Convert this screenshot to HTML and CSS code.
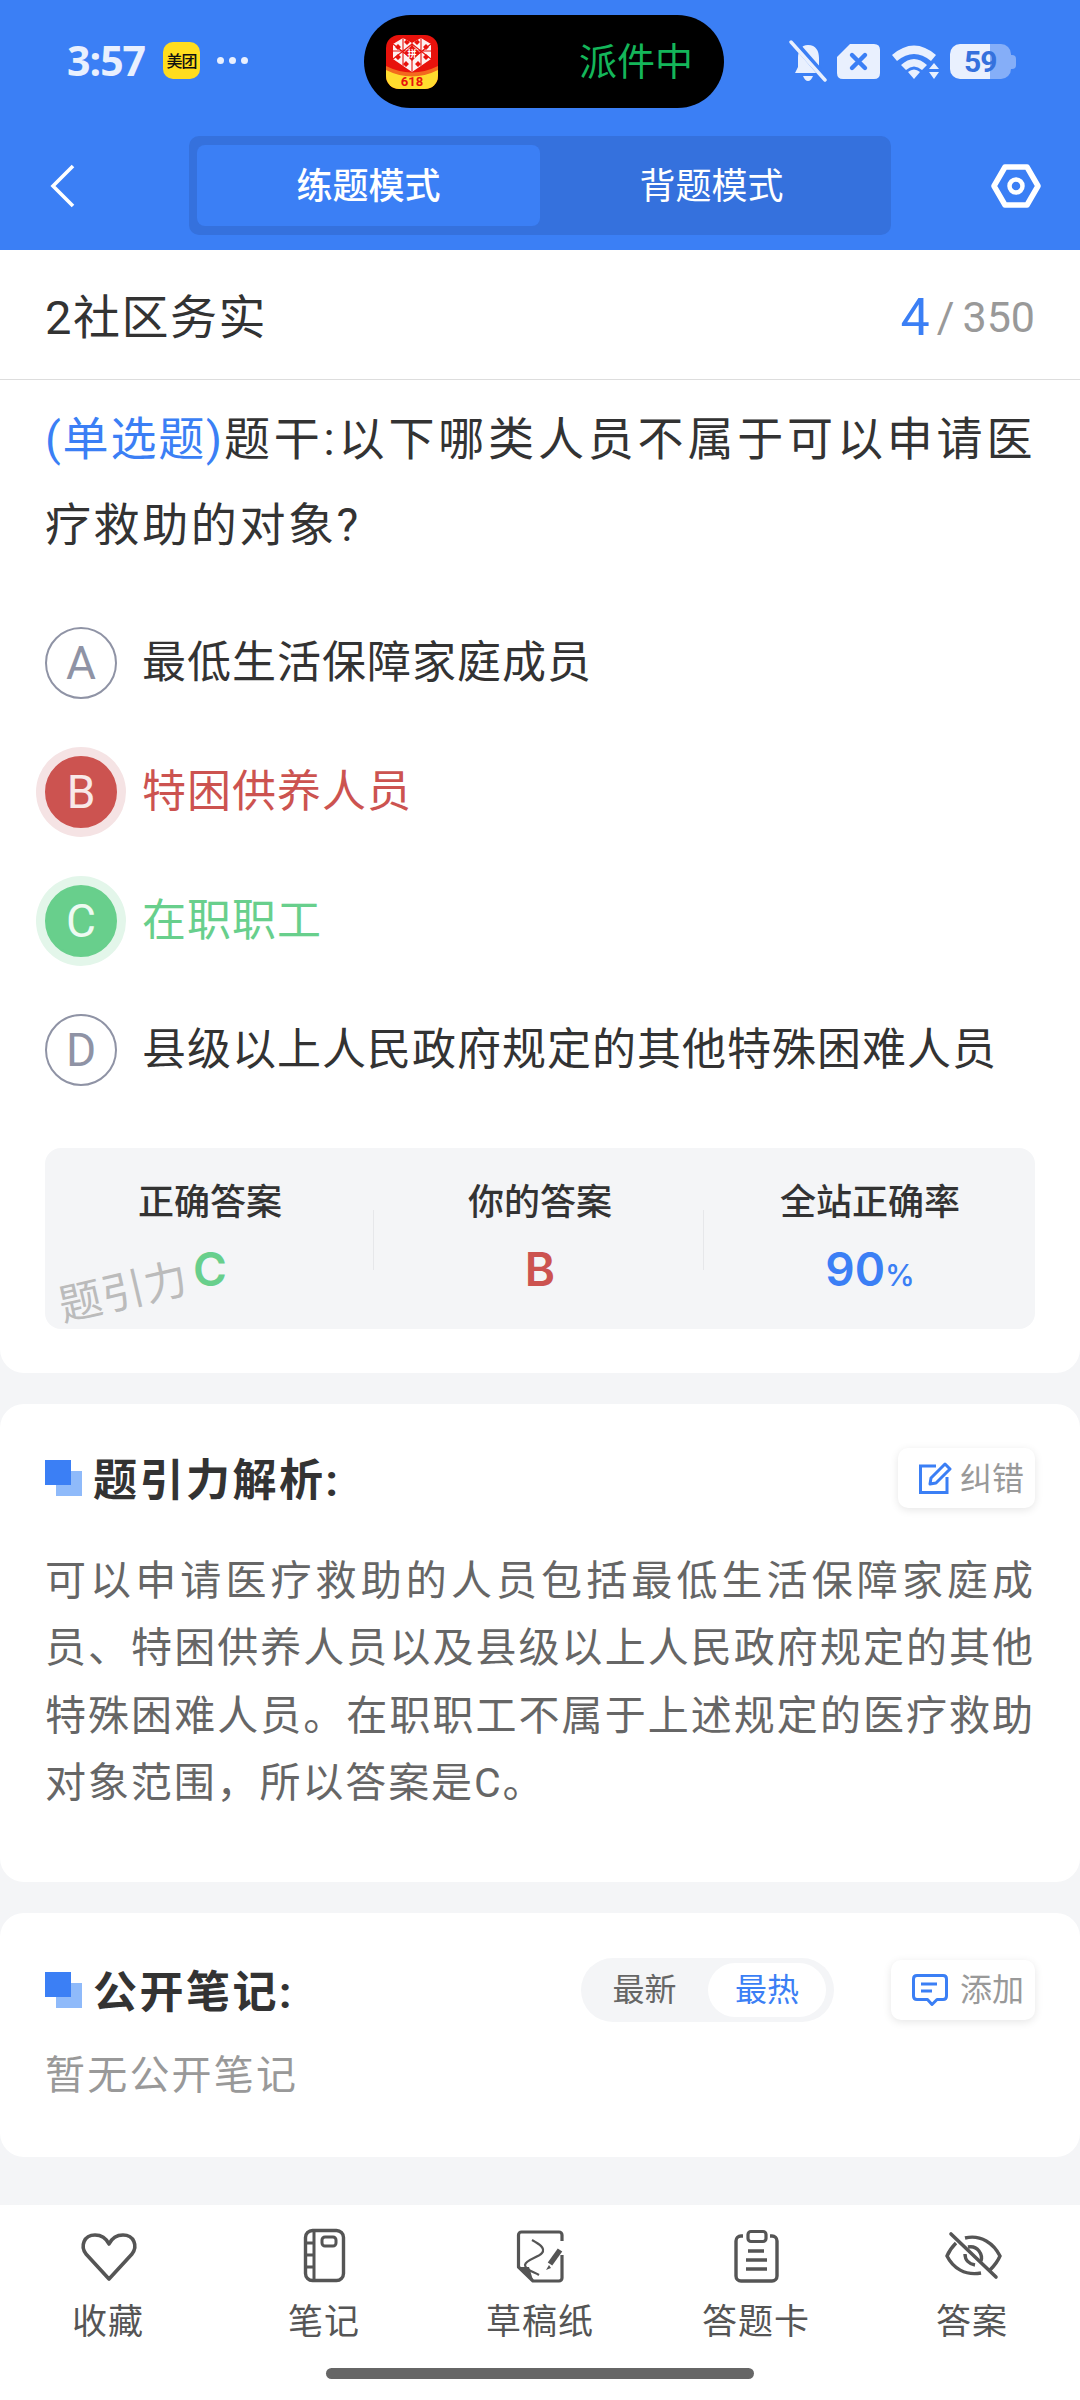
FILE: index.html
```html
<!DOCTYPE html>
<html lang="zh-CN">
<head>
<meta charset="utf-8">
<title>题引力</title>
<link rel="stylesheet" href="styles.css">
</head>
<body>
<div class="page">
  <header class="header">
    <div class="status">
      <div class="status-left">
        <span class="time">3:57</span>
        <span class="mt">美团</span>
        <span class="dots"><i></i><i></i><i></i></span>
      </div>
      <div class="pill">
        <svg class="pdd" viewBox="0 0 52 54" width="52" height="54">
          <defs>
            <clipPath id="pc"><rect width="52" height="54" rx="13"/></clipPath>
            <clipPath id="ph"><path d="M26 8 L35 3 L45 9 V24 L26 37 L7 24 V9 L17 3Z"/></clipPath>
          </defs>
          <g clip-path="url(#pc)">
            <rect width="52" height="54" fill="#e8120c"/>
            <path d="M0 33 Q26 46 52 33 V54 H0Z" fill="#ffdc2e"/>
            <path d="M0 31 Q26 44 52 31 V35 Q26 48 0 35Z" fill="#f36a1e"/>
          </g>
          <g clip-path="url(#ph)">
            <rect width="52" height="40" fill="#fdf1f1"/>
            <path d="M26 8 V37 M7 9 L26 24 L45 9 M7 24 L26 9 L45 24 M17 3 V31 M35 3 V31 M7 16 H45" stroke="#e8120c" stroke-width="1.1" fill="none"/>
            <path d="M12 9 L15 12 L12 15 L9 12Z M40 9 L43 12 L40 15 L37 12Z M12 19 L15 22 L12 25 L9 22Z M40 19 L43 22 L40 25 L37 22Z M20 26 L23 29 L20 32 L17 29Z M32 26 L35 29 L32 32 L29 29Z M21 4 L24 7 L21 10 L18 7Z M31 4 L34 7 L31 10 L28 7Z" fill="#e8120c"/>
            <path d="M26 10 L34 18 L26 26 L18 18Z" fill="#e8120c"/>
          </g>
          <text x="26" y="22" class="pdd-t1" text-anchor="middle">拼</text>
          <text x="26" y="51" class="pdd-t2" text-anchor="middle">618</text>
        </svg>
        <span class="pill-text">派件中</span>
      </div>
      <div class="status-right">
        <svg class="st-bell" viewBox="0 0 38 42" width="38" height="42">
          <path d="M19 5 C27 5 30 11 30 18 V27 L34 33 H6 L9 27 V18 C9 11 12 5 19 5Z" fill="#e9f0fe"/>
          <path d="M14 36 H24 Q22 41 19 41 Q16 41 14 36Z" fill="#e9f0fe"/>
          <path d="M3 0 L38 40" stroke="#3b7ff5" stroke-width="7"/>
          <path d="M2 2 L36 40" stroke="#e9f0fe" stroke-width="3.4" stroke-linecap="round"/>
        </svg>
        <svg class="st-sim" viewBox="0 0 43 35" width="43" height="35">
          <path d="M13 0 H37 Q43 0 43 6 V29 Q43 35 37 35 H6 Q0 35 0 29 V13Z" fill="#e9f0fe"/>
          <path d="M15 11 L28 24 M28 11 L15 24" stroke="#3b7ff5" stroke-width="4.4" stroke-linecap="round"/>
        </svg>
        <svg class="st-wifi" viewBox="0 0 48 36" width="48" height="36">
          <path d="M0 11 Q22 -8 44 11 L39 17 Q22 3 5 17Z" fill="#e9f0fe"/>
          <path d="M9 21 Q22 9 35 21 L30 26 Q22 19 14 26Z" fill="#e9f0fe"/>
          <path d="M16 28 Q22 23 28 28 L22 35Z" fill="#e9f0fe"/>
          <path d="M42 19 L47 25 H37Z M42 35 L47 28 H37Z" fill="#e9f0fe"/>
        </svg>
        <div class="battery">
          <span class="bat-fill"></span>
          <span class="bat-rest"></span>
          <span class="bat-cap"></span>
          <span class="bat-num">59</span>
        </div>
      </div>
    </div>
    <nav class="nav">
      <svg class="back" viewBox="0 0 26 44" width="26" height="44"><path d="M23 2 L3 22 L23 42" fill="none" stroke="#fff" stroke-width="3.6"/></svg>
      <div class="tabs">
        <span class="tab tab-on">练题模式</span>
        <span class="tab">背题模式</span>
      </div>
      <svg class="hex" viewBox="0 0 50 44" width="50" height="44">
        <path d="M14 3 H36 L47 22 L36 41 H14 L3 22Z" fill="none" stroke="#fff" stroke-width="5.5" stroke-linejoin="round"/>
        <circle cx="25" cy="22" r="6.5" fill="none" stroke="#fff" stroke-width="4.5"/>
      </svg>
    </nav>
  </header>

  <section class="card card-q">
    <div class="title-row">
      <span class="title">2社区务实</span>
      <span class="count"><b>4</b><i>/</i>350</span>
    </div>
    <p class="question"><span class="q-type">(单选题)</span>题干:以下哪类人员不属于可以申请医疗救助的对象?</p>
    <ul class="options">
      <li class="opt"><span class="dot">A</span><span class="opt-t">最低生活保障家庭成员</span></li>
      <li class="opt opt-bad"><span class="dot">B</span><span class="opt-t">特困供养人员</span></li>
      <li class="opt opt-ok"><span class="dot">C</span><span class="opt-t">在职职工</span></li>
      <li class="opt"><span class="dot">D</span><span class="opt-t">县级以上人民政府规定的其他特殊困难人员</span></li>
    </ul>
    <div class="stats">
      <div class="stat"><span class="stat-l">正确答案</span><span class="stat-v v-ok">C</span></div>
      <div class="stat"><span class="stat-l">你的答案</span><span class="stat-v v-bad">B</span></div>
      <div class="stat"><span class="stat-l">全站正确率</span><span class="stat-v v-rate">90<small>%</small></span></div>
      <span class="mark">题引力</span>
    </div>
  </section>

  <section class="card card-a">
    <div class="sec-head">
      <div class="sec-title"><span class="sq"></span><h2>题引力解析:</h2></div>
      <span class="mini">
        <svg viewBox="0 0 34 34" width="34" height="34"><path d="M18 5 H2.5 V31.5 H29 V16" fill="none" stroke="#3b7ff5" stroke-width="3"/><path d="M13 17 L27 3 L32 8 L18 22 L12 23Z" fill="none" stroke="#3b7ff5" stroke-width="3" stroke-linejoin="round"/></svg>
        <span class="mini-t">纠错</span>
      </span>
    </div>
    <p class="analysis">可以申请医疗救助的人员包括最低生活保障家庭成员、特困供养人员以及县级以上人民政府规定的其他特殊困难人员。在职职工不属于上述规定的医疗救助对象范围，所以答案是C。</p>
  </section>

  <section class="card card-n">
    <div class="sec-head sec-head-n">
      <div class="sec-title"><span class="sq"></span><h2>公开笔记:</h2></div>
      <div class="sort"><span class="sort-i">最新</span><span class="sort-i sort-on">最热</span></div>
      <span class="mini mini-add">
        <svg viewBox="0 0 36 32" width="36" height="32"><path d="M5 1.5 H31 Q34.5 1.5 34.5 5 V22 Q34.5 25.5 31 25.5 H25 L20 30.5 L15.5 25.5 H5 Q1.5 25.5 1.5 22 V5 Q1.5 1.500 5 1.5Z" fill="none" stroke="#3b7ff5" stroke-width="3" stroke-linejoin="round"/><path d="M9 10 H25 M9 17 H20" stroke="#3b7ff5" stroke-width="3.2"/></svg>
        <span class="mini-t">添加</span>
      </span>
    </div>
    <p class="empty">暂无公开笔记</p>
  </section>

  <footer class="bar">
    <div class="bar-items">
      <div class="item">
        <svg viewBox="0 0 64 60" width="64" height="60"><path d="M33 53 L10 28 C4 20 8 9 19 9 C25 9 30 12 33 18 C36 12 41 9 47 9 C58 9 62 20 56 28Z" fill="none" stroke="#555" stroke-width="3.6" stroke-linejoin="round"/></svg>
        <span>收藏</span>
      </div>
      <div class="item">
        <svg viewBox="0 0 64 60" width="64" height="60"><rect x="13.5" y="4.5" width="38" height="50" rx="7" fill="none" stroke="#555" stroke-width="3.4"/><path d="M22 4.5 V54.5 M13.5 17 H22 M13.5 29 H22 M13.5 41 H22" stroke="#555" stroke-width="3" fill="none"/><rect x="30" y="11" width="14" height="9" rx="3" fill="none" stroke="#555" stroke-width="3"/></svg>
        <span>笔记</span>
      </div>
      <div class="item">
        <svg viewBox="0 0 64 60" width="64" height="60"><path d="M54 29 V52 a3 3 0 0 1 -3 3 H25 L10.500 41 V9 a3 3 0 0 1 3 -3 H51 a3 3 0 0 1 3 3 V15" fill="none" stroke="#555" stroke-width="3.2" stroke-linejoin="round"/><path d="M11 41 H21 L25 54Z" fill="#555"/><path d="M24 14 C31 18 38 22 34 27 C30 32 18 33 17 39 C17 44 26 46 31 49" fill="none" stroke="#555" stroke-width="2.2"/><path d="M42 38 L52 24" stroke="#555" stroke-width="5.5"/><path d="M41 39 L38 44 L43 42Z" fill="#555"/></svg>
        <span>草稿纸</span>
      </div>
      <div class="item">
        <svg viewBox="0 0 64 60" width="64" height="60"><path d="M19 10 H17 a5 5 0 0 0 -5 5 V50 a5 5 0 0 0 5 5 H48 a5 5 0 0 0 5 -5 V15 a5 5 0 0 0 -5 -5 H46" fill="none" stroke="#555" stroke-width="3.4"/><rect x="24" y="5.500" width="18" height="10" rx="3" fill="none" stroke="#555" stroke-width="3.2"/><path d="M24 25 H40 M22 34 H43 M22 43 H43" stroke="#555" stroke-width="3.4"/></svg>
        <span>答题卡</span>
      </div>
      <div class="item">
        <svg viewBox="0 0 64 60" width="64" height="60"><path d="M16 17 C12 21 9 25 7 30 C13 42 25 50 41 47" fill="none" stroke="#555" stroke-width="3.4"/><path d="M25 12 C41 8 54 18 60 30 C57 37 54 40 50 44" fill="none" stroke="#555" stroke-width="3.4"/><path d="M28 21 C38 19 43 29 41 35 M25 28 C25 34 29 38 35 39" fill="none" stroke="#555" stroke-width="3.4"/><path d="M11 8 L56 51" stroke="#555" stroke-width="3.6" stroke-linecap="round"/></svg>
        <span>答案</span>
      </div>
    </div>
    <div class="home"></div>
  </footer>
</div>
</body>
</html>
```
FILE: styles.css
```css
* { box-sizing: border-box; }
html, body { margin: 0; padding: 0; }
body {
  width: 1080px;
  height: 2400px;
  overflow: hidden;
  font-family: Roboto, "Noto Sans CJK SC", sans-serif;
  background: #f4f5f7;
  color: #333;
}
p, ul, h2 { margin: 0; padding: 0; }
.page { display: flex; flex-direction: column; height: 2400px; }

/* header */
.header { background: #3b7ff5; height: 250px; display: flex; flex-direction: column; }
.status { display: grid; grid-template-columns: 364px 360px 1fr; height: 136px; padding-top: 15px; align-items: start; }
.status-left { display: flex; align-items: center; padding-left: 67px; height: 90px; }
.time { font-size: 41px; font-weight: 700; color: #e9f0fe; width: 96px; font-family: "Open Sans", sans-serif; letter-spacing: -1px; }
.mt { width: 37px; height: 37px; border-radius: 10px; background: #ffdd1e; color: #111; font-size: 16px; font-weight: 500; display: flex; align-items: center; justify-content: center; white-space: nowrap; letter-spacing: -1px; }
.dots { display: flex; gap: 5px; margin-left: 17px; }
.dots i { width: 7px; height: 7px; border-radius: 50%; background: #e9f0fe; }
.pill { height: 93px; border-radius: 47px; background: #000; display: flex; align-items: center; justify-content: space-between; padding: 0 31px 0 22px; }
.pdd { display: block; }
.pdd-t1 { font-size: 9px; font-weight: 700; fill: #fff; }
.pdd-t2 { font-size: 13px; font-weight: 700; fill: #e8120c; font-family: Roboto, sans-serif; }
.pill-text { color: #14b65a; font-size: 38px; line-height: 1; }
.status-right { display: flex; align-items: center; height: 93px; padding: 0 0 0 65px; }
.st-bell { margin-top: -2px; margin-right: 10px; }
.st-sim { margin-right: 12px; }
.st-wifi { margin-right: 10px; }
.battery { display: flex; align-items: center; position: relative; width: 66px; height: 35px; }
.bat-fill { width: 40px; height: 35px; background: #e9f0fe; border-radius: 10px 0 0 10px; }
.bat-rest { width: 21px; height: 35px; background: #85aef8; border-radius: 0 10px 10px 0; }
.bat-cap { width: 5px; height: 14px; background: #85aef8; border-radius: 0 4px 4px 0; }
.bat-num { position: absolute; left: 14px; top: 0; line-height: 35px; font-size: 30px; font-weight: 700; color: #3571dd; letter-spacing: -1px; }

.nav { display: flex; align-items: center; height: 99px; }
.back { margin-left: 50px; margin-right: 113px; }
.tabs { display: flex; width: 702px; height: 99px; padding: 9px 8px; background: #3571dd; border-radius: 10px; }
.tab { flex: 1; display: flex; align-items: center; justify-content: center; color: #fff; font-size: 36px; border-radius: 8px; padding-bottom: 5px; }
.tab-on { background: #3b7ff5; font-weight: 500; flex: 0 0 343px; }
.hex { margin-left: 100px; }

/* cards */
.card { background: #fff; }
.card-q { height: 1123px; border-radius: 0 0 24px 24px; }
.card-a { margin-top: 31px; height: 478px; border-radius: 24px; padding: 44px 45px 0; }
.card-n { margin-top: 31px; height: 244px; border-radius: 24px; padding: 45px 45px 0; }

.title-row { height: 130px; display: flex; align-items: center; justify-content: space-between; padding: 0 45px; border-bottom: 1px solid #ddd; }
.title { font-size: 47px; letter-spacing: 1.5px; padding-bottom: 3px; }
.count { color: #999; font-size: 43px; white-space: nowrap; padding-top: 5px; }
.count b { font-size: 52px; font-weight: 400; color: #3b7ff5; vertical-align: -3px; }
.count i { font-style: normal; margin: 0 8px 0 7px; }
.question { padding: 16px 45px 0; font-size: 46px; line-height: 86px; letter-spacing: 2.6px; color: #333; text-align: justify; }
.q-type { color: #3b7ff5; letter-spacing: .6px; }

.options { list-style: none; margin-top: 30px; padding: 0 45px; }
.opt { height: 129px; display: flex; align-items: center; gap: 25px; font-size: 44px; letter-spacing: 1px; color: #333; }
.opt-t { padding-bottom: 8px; }
.dot { flex: none; width: 72px; height: 72px; border-radius: 50%; border: 2px solid #8f93a5; color: #8f93a5; display: flex; align-items: center; justify-content: center; font-size: 46px; letter-spacing: 0; }
.opt-bad { color: #cc5350; }
.opt-bad .dot { background: #cc5350; border-color: #cc5350; color: #f8e8e8; box-shadow: 0 0 0 9px #f5e3e4; }
.opt-ok { color: #68cf8c; }
.opt-ok .dot { background: #68cf8c; border-color: #68cf8c; color: #eefaf2; box-shadow: 0 0 0 9px #e3f6ea; }

.stats { position: relative; margin: 34px 45px 0; height: 181px; border-radius: 16px; background: #f4f5f7; display: grid; grid-template-columns: repeat(3, 1fr); padding-top: 29px; }
.stat { display: flex; flex-direction: column; align-items: center; position: relative; }
.stat + .stat::before { content: ""; position: absolute; left: -2px; top: 33px; height: 60px; width: 1px; background: #e6e7ea; }
.stat-l { font-size: 36px; font-weight: 500; line-height: 52px; }
.stat-v { font-size: 46px; font-weight: 600; line-height: 64px; margin-top: 8px; font-family: Inter, sans-serif; }
.stat-v small { font-size: 30px; font-weight: 500; }
.v-ok { color: #68cf8c; }
.v-bad { color: #cc5350; }
.v-rate { color: #3b7ff5; }
.mark { position: absolute; left: 13px; bottom: 7px; font-size: 43px; color: #bbb; transform: rotate(-13deg); letter-spacing: .5px; line-height: 60px; }

.sec-head { display: flex; align-items: center; justify-content: space-between; height: 60px; }
.sec-head-n { height: 64px; }
.sec-title { display: flex; align-items: center; flex: 1; }
.sq { position: relative; width: 37px; height: 36px; margin-right: 11px; }
.sq::before { content: ""; position: absolute; left: 11px; top: 11px; width: 26px; height: 25px; background: #8fbafa; }
.sq::after { content: ""; position: absolute; left: 0; top: 0; width: 26px; height: 25px; background: #3b7ff5; }
.sec-title h2 { font-size: 44px; font-weight: 700; letter-spacing: 2.5px; color: #333; line-height: 60px; padding-top: 5px; }
.mini { display: flex; align-items: center; gap: 8px; height: 60px; padding: 0 11px 0 20px; font-size: 32px; color: #999; background: #fff; border-radius: 10px; box-shadow: 0 2px 8px rgba(0,0,0,.1); }
.mini-t { padding-bottom: 4px; }
.mini-add { margin-left: 57px; padding: 0 11px 0 21px; gap: 12px; }
.mini-add .mini-t { padding-bottom: 6px; }
.analysis { margin-top: 40px; font-size: 41px; line-height: 67.3px; letter-spacing: 1.9px; color: #666; text-align: justify; }

.sort { display: flex; width: 253px; height: 64px; padding: 5px 8px 5px 0; background: #f4f5f7; border-radius: 32px; }
.sort-i { flex: 1; display: flex; align-items: center; justify-content: center; font-size: 32px; color: #666; padding-bottom: 6px; }
.sort-on { flex: 0 0 118px; background: #fff; border-radius: 27px; color: #3b7ff5; }
.empty { margin-top: 24px; font-size: 40px; line-height: 60px; color: #999; letter-spacing: 2.2px; }

/* bottom bar */
.bar { margin-top: 48px; height: 195px; background: #fff; display: flex; flex-direction: column; }
.bar-items { display: grid; grid-template-columns: repeat(5, 1fr); padding-top: 21px; }
.item { display: flex; flex-direction: column; align-items: center; font-size: 35px; color: #555; }
.item svg { display: block; }
.item span { margin-top: 11px; line-height: 52px; letter-spacing: 1px; }
.home { width: 428px; height: 11px; border-radius: 6px; background: #666; margin: 19px auto 0; }
```
